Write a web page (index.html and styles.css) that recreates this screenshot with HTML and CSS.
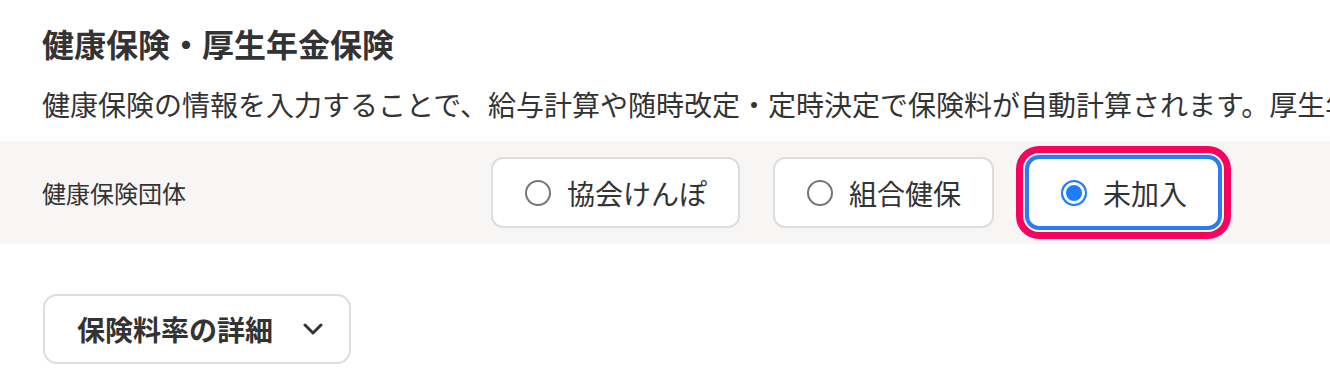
FILE: index.html
```html
<!DOCTYPE html>
<html lang="ja">
<head>
  <meta charset="UTF-8" />
  <meta name="viewport" content="width=device-width, initial-scale=1.0"/>
  <title>健康保険・厚生年金保険</title>
  <link rel="stylesheet" href="styles.css">
</head>
<body>

  <section class="insurance">
    <h2 class="section-title">健康保険・厚生年金保険</h2>
    <p class="section-desc">健康保険の情報を入力することで、給与計算や随時改定・定時決定で保険料が自動計算されます。厚生年金保険の情報も同様に入力してください。</p>

    <div class="field-row">
      <div class="field-label">健康保険団体</div>
      <div class="choices">
        <label class="choice">
          <input type="radio" name="kenpo" value="kyokai">
          <span>協会けんぽ</span>
        </label>
        <label class="choice">
          <input type="radio" name="kenpo" value="kumiai">
          <span>組合健保</span>
        </label>
        <label class="choice selected">
          <input type="radio" name="kenpo" value="none" checked>
          <span>未加入</span>
        </label>
      </div>
    </div>

    <button class="detail-toggle" type="button">
      <span>保険料率の詳細</span>
      <svg class="chevron" width="20" height="12" viewBox="0 0 20 12">
        <path d="M2 2 L10 10 L18 2" fill="none" stroke="#333" stroke-width="3" stroke-linecap="round" stroke-linejoin="round"/>
      </svg>
    </button>
  </section>

</body>
</html>
```

FILE: styles.css
```css
body {
  margin: 0;
  font-family: "Noto Sans CJK JP", "Noto Sans", sans-serif;
  color: #333;
  background-color: #fff;
  overflow: hidden;
}

.insurance {
  padding-top: 19px;
}

.section-title {
  font-size: 32px;
  line-height: 48px;
  font-weight: 700;
  margin: 0 0 0 42px;
}

.section-desc {
  font-size: 28px;
  line-height: 42px;
  margin: 16px 0 0 42px;
  white-space: nowrap;
}

.field-row {
  display: grid;
  grid-template-columns: 449px 1fr;
  align-items: center;
  height: 103px;
  margin-top: 16px;
  padding-left: 42px;
  background-color: #f7f6f4;
}

.field-label {
  font-size: 24px;
}

.choices {
  display: flex;
  gap: 33px;
}

.choice {
  display: flex;
  align-items: center;
  gap: 16px;
  height: 71px;
  box-sizing: border-box;
  padding: 0 31px 0 32px;
  background: #fff;
  border: 2px solid #ddd;
  border-radius: 12px;
  font-size: 28px;
  cursor: pointer;
}

.choice input {
  appearance: none;
  margin: 0;
  width: 26px;
  height: 26px;
  border: 2px solid #777;
  border-radius: 50%;
  background: #fff;
}

.choice input:checked {
  border-color: #1d7cff;
  background: #1d7cff;
  box-shadow: inset 0 0 0 3px #fff;
}

.choice.selected {
  border-color: #2b7bf6;
  box-shadow: 0 0 0 2px #2b7bf6;
  outline: 7px solid #f5035f;
  outline-offset: 4px;
}

.detail-toggle {
  display: flex;
  align-items: center;
  gap: 30px;
  height: 70px;
  margin: 50px 0 0 43px;
  padding: 0 26px 0 32px;
  background: #fff;
  border: 2px solid #ddd;
  border-radius: 14px;
  font-family: inherit;
  font-size: 28px;
  font-weight: 700;
  color: #333;
  cursor: pointer;
}

.chevron {
  display: block;
}
```
